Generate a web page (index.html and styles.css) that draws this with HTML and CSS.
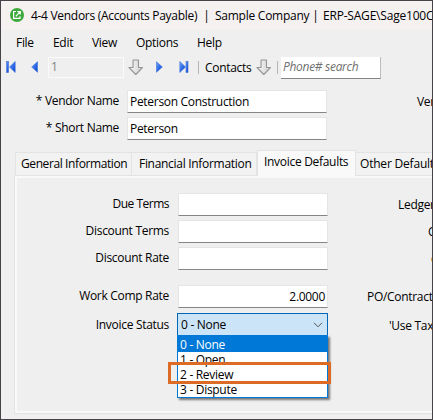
FILE: index.html
```html
<!DOCTYPE html>
<html lang="en">
<head>
    <meta charset="UTF-8">
    <meta name="viewport" content="width=device-width, initial-scale=1.0">
    <title>4-4 Vendors (Accounts Payable)</title>
    <link rel="stylesheet" href="styles.css">
</head>
<body>
    <div class="window">
        <header class="titlebar">
            <svg class="logo" width="14" height="14" viewBox="0 0 14 14">
                <circle cx="7" cy="7" r="7" fill="#3da93c"/>
                <path d="M6 3.5H3.6V10.4H10V8.2" fill="none" stroke="#fff" stroke-width="1.2"/>
                <path d="M5.8 8.3L9.8 4.2M7.3 3.7H10.3V6.6" fill="none" stroke="#fff" stroke-width="1.2"/>
            </svg>
            <span class="title-page">4-4 Vendors (Accounts Payable)</span>
            <span class="title-sep">|</span>
            <span class="title-company">Sample Company</span>
            <span class="title-sep">|</span>
            <span class="title-server">ERP-SAGE\Sage100C</span>
        </header>

        <nav class="menu">
            <span class="menu-file">File</span>
            <span class="menu-edit">Edit</span>
            <span class="menu-view">View</span>
            <span class="menu-options">Options</span>
            <span class="menu-help">Help</span>
        </nav>

        <div class="toolbar">
            <svg class="hidden-defs">
                <defs>
                    <linearGradient id="blue" x1="0" y1="0" x2="1" y2="1">
                        <stop offset="0" stop-color="#79a9fa"/>
                        <stop offset="0.5" stop-color="#2f6be8"/>
                        <stop offset="1" stop-color="#1245c4"/>
                    </linearGradient>
                    <linearGradient id="grey" x1="0" y1="0" x2="1" y2="0">
                        <stop offset="0" stop-color="#fafafa"/>
                        <stop offset="1" stop-color="#cfcfcf"/>
                    </linearGradient>
                </defs>
            </svg>
            <svg class="first" width="10" height="12" viewBox="0 0 10 12">
                <rect x="0.5" y="0.5" width="2" height="11" fill="url(#blue)" stroke="#3d6fd8" stroke-width="0.6"/>
                <path d="M9.2 0.5V11.5L3.5 6Z" fill="url(#blue)" stroke="#3d6fd8" stroke-width="0.6"/>
            </svg>
            <svg class="prev" width="7" height="12" viewBox="0 0 7 12">
                <path d="M6.5 0.7V11.3L0.7 6Z" fill="url(#blue)" stroke="#3d6fd8" stroke-width="0.6"/>
            </svg>
            <div class="record">1</div>
            <svg class="down" width="16" height="17" viewBox="0 0 16 17">
                <path d="M5 1H10.5V8.5H14.5L7.8 15.5L1 8.5H5Z" fill="url(#grey)" stroke="#959595" stroke-width="1.1" stroke-linejoin="round"/>
            </svg>
            <svg class="next" width="7" height="12" viewBox="0 0 7 12">
                <path d="M0.5 0.7V11.3L6.3 6Z" fill="url(#blue)" stroke="#3d6fd8" stroke-width="0.6"/>
            </svg>
            <svg class="last" width="10" height="12" viewBox="0 0 10 12">
                <rect x="7" y="0.5" width="2" height="11" fill="url(#blue)" stroke="#3d6fd8" stroke-width="0.6"/>
                <path d="M0.8 0.5V11.5L6.5 6Z" fill="url(#blue)" stroke="#3d6fd8" stroke-width="0.6"/>
            </svg>
            <i class="divider"></i>
            <span class="contacts">Contacts</span>
            <svg class="down-contacts" width="16" height="17" viewBox="0 0 16 17">
                <path d="M5 1H10.5V8.5H14.5L7.8 15.5L1 8.5H5Z" fill="url(#grey)" stroke="#959595" stroke-width="1.1" stroke-linejoin="round"/>
            </svg>
            <i class="divider"></i>
            <div class="search"><span>Phone# search</span></div>
        </div>

        <div class="header-form">
            <div class="row">
                <label>* Vendor Name</label>
                <div class="field">Peterson Construction</div>
                <span class="side side-vendor">Vendor</span>
            </div>
            <div class="row">
                <label>* Short Name</label>
                <div class="field">Peterson</div>
            </div>
        </div>

        <div class="tabs">
            <div class="tab tab-general">General Information</div>
            <div class="tab tab-financial">Financial Information</div>
            <div class="tab tab-invoice active">Invoice Defaults</div>
            <div class="tab tab-other">Other Defaults</div>
        </div>

        <div class="panel">
            <div class="row">
                <label class="tight">Due Terms</label>
                <div class="field"></div>
                <span class="side side-ledger">Ledger</span>
            </div>
            <div class="row">
                <label>Discount Terms</label>
                <div class="field"></div>
                <span class="side side-c">C</span>
            </div>
            <div class="row">
                <label>Discount Rate</label>
                <div class="field"></div>
                <span class="side side-o">o</span>
            </div>
            <div class="row row-comp">
                <label>Work Comp Rate</label>
                <div class="field number">2.0000</div>
                <span class="side side-po">PO/Contract</span>
            </div>
            <div class="row row-status">
                <label>Invoice Status</label>
                <div class="combo">
                    <span>0 - None</span>
                    <svg width="10" height="6" viewBox="0 0 10 6">
                        <path d="M1 0.8L5 4.8L9 0.8" fill="none" stroke="#555" stroke-width="1"/>
                    </svg>
                    <div class="list">
                        <div class="option selected">0 - None</div>
                        <div class="option">1 - Open</div>
                        <div class="option">2 - Review</div>
                        <div class="option">3 - Dispute</div>
                        <div class="highlight"></div>
                    </div>
                </div>
                <span class="side side-tax">'Use Tax'</span>
            </div>
        </div>
    </div>
</body>
</html>
```
FILE: styles.css
```css
* {
    box-sizing: border-box;
}
body {
    margin: 0;
    font-family: "Open Sans", "Noto Sans", sans-serif;
    font-size: 12px;
    letter-spacing: -0.3px;
    color: #000;
    background: #efefef;
}
.window {
    width: 433px;
    height: 420px;
    border: 1px solid #454347;
    background: #efefef;
    overflow: hidden;
    white-space: nowrap;
}
svg {
    display: block;
    flex: none;
}
.titlebar {
    display: flex;
    align-items: center;
    height: 29px;
    padding: 0 0 1px 9px;
    background: #f6f1f1;
}
.titlebar span {
    flex: none;
}
.title-page {
    width: 168px;
    margin-left: 7px;
}
.title-sep {
    width: 15px;
    text-align: center;
}
.title-company {
    width: 93px;
    margin-left: 1px;
    letter-spacing: -0.25px;
}
.title-server {
    letter-spacing: -0.2px;
}
.menu {
    display: flex;
    align-items: center;
    height: 24px;
    padding-left: 15px;
}
.menu-file {
    width: 37px;
}
.menu-edit {
    width: 39px;
}
.menu-view {
    width: 44px;
}
.menu-options {
    width: 61px;
}
.toolbar {
    display: flex;
    align-items: center;
    height: 26px;
    padding-left: 5px;
}
.toolbar > * {
    flex: none;
}
.hidden-defs {
    width: 0;
    height: 0;
}
.prev {
    margin-left: 15px;
}
.record {
    width: 76px;
    height: 21px;
    margin-left: 10px;
    padding-left: 2px;
    border: 1px solid #fafafa;
    line-height: 18px;
    color: #838383;
}
.down {
    margin-left: 4px;
}
.next {
    margin-left: 12px;
}
.last {
    margin-left: 16px;
}
.divider {
    width: 1px;
    height: 13px;
    margin-left: 9px;
    background: #b5b5b5;
}
.contacts {
    width: 47px;
    margin-left: 6px;
}
.down-contacts {
    margin-left: 4px;
}
.down-contacts + .divider {
    margin-left: 5px;
}
.search {
    width: 100px;
    height: 22px;
    margin-top: 2px;
    margin-left: 3px;
    padding-left: 2px;
    border-right: 1px solid #bdbdbd;
    border-bottom: 1px solid #858585;
    background: #fff;
    line-height: 20px;
    font-style: italic;
    color: #707070;
}
.row {
    display: flex;
    height: 23px;
    margin-bottom: 4px;
    line-height: 22px;
}
.row label {
    flex: none;
    text-align: right;
}
.field {
    flex: none;
    border: 1px solid #e5e5e5;
    border-bottom-color: #858585;
    background: #fff;
    line-height: 21px;
    padding: 0 2px 0 1px;
}
.number {
    text-align: right;
}
.side {
    flex: none;
    line-height: 23px;
}
.header-form {
    height: 70px;
    padding-top: 10px;
}
.header-form label {
    width: 118px;
    margin-right: 8px;
}
.header-form .field {
    width: 200px;
    padding-left: 2px;
}
.side-vendor {
    margin-left: 90px;
}
.tabs {
    display: flex;
    align-items: flex-end;
    height: 25px;
    padding-left: 14px;
}
.tab {
    flex: none;
    height: 23px;
    padding-left: 5px;
    border: 1px solid #e3e3e3;
    border-bottom: none;
    background: #f2f2f2;
    line-height: 22px;
}
.tab-general {
    width: 117px;
    letter-spacing: -0.4px;
}
.tab-financial {
    width: 125px;
    padding-left: 7px;
    border-left: none;
}
.tab-invoice {
    width: 99px;
    padding-left: 6px;
}
.tab-other {
    width: 90px;
    padding-left: 4px;
    border-left: none;
    letter-spacing: -0.2px;
}
.tab.active {
    position: relative;
    height: 26px;
    margin-bottom: -1px;
    background: #f9f9f9;
}
.panel {
    width: 440px;
    height: 239px;
    margin-left: 13px;
    padding-top: 17px;
    border: 1px solid #e3e3e3;
    box-shadow: inset 0 0 0 2px #f9f9f9;
}
.panel label {
    width: 154px;
    margin-right: 9px;
}
.panel label.tight {
    letter-spacing: -0.5px;
}
.panel .field {
    width: 150px;
}
.row-comp {
    margin-top: 15px;
}
.row-status {
    margin-top: 5px;
    line-height: 24px;
}
.combo {
    position: relative;
    display: flex;
    justify-content: space-between;
    align-items: center;
    width: 151px;
    height: 23px;
    margin-left: -1px;
    padding: 0 4px 0 3px;
    border: 1px solid #0067b8;
    background: #cce4f7;
}
.combo > span {
    padding-top: 1px;
}
.list {
    position: absolute;
    left: -1px;
    top: 21px;
    width: 151px;
    height: 63px;
    border: 1px solid #0078d7;
    background: #fff;
    box-shadow: 2px 2px 2px rgba(0, 0, 0, 0.5);
}
.option {
    height: 15px;
    padding-left: 2px;
    line-height: 16px;
}
.selected {
    height: 16px;
    line-height: 17px;
    background: #0078d7;
    color: #fff;
}
.highlight {
    position: absolute;
    left: -10px;
    top: 26px;
    width: 163px;
    height: 22px;
    border: 3px solid #dc6b25;
}
.side-ledger {
    margin-left: 70px;
}
.side-c {
    margin-left: 100px;
}
.side-o {
    margin-left: 103px;
}
.side-po {
    margin-left: 39px;
}
.side-tax {
    margin-left: 61px;
    line-height: 25px;
}
```
